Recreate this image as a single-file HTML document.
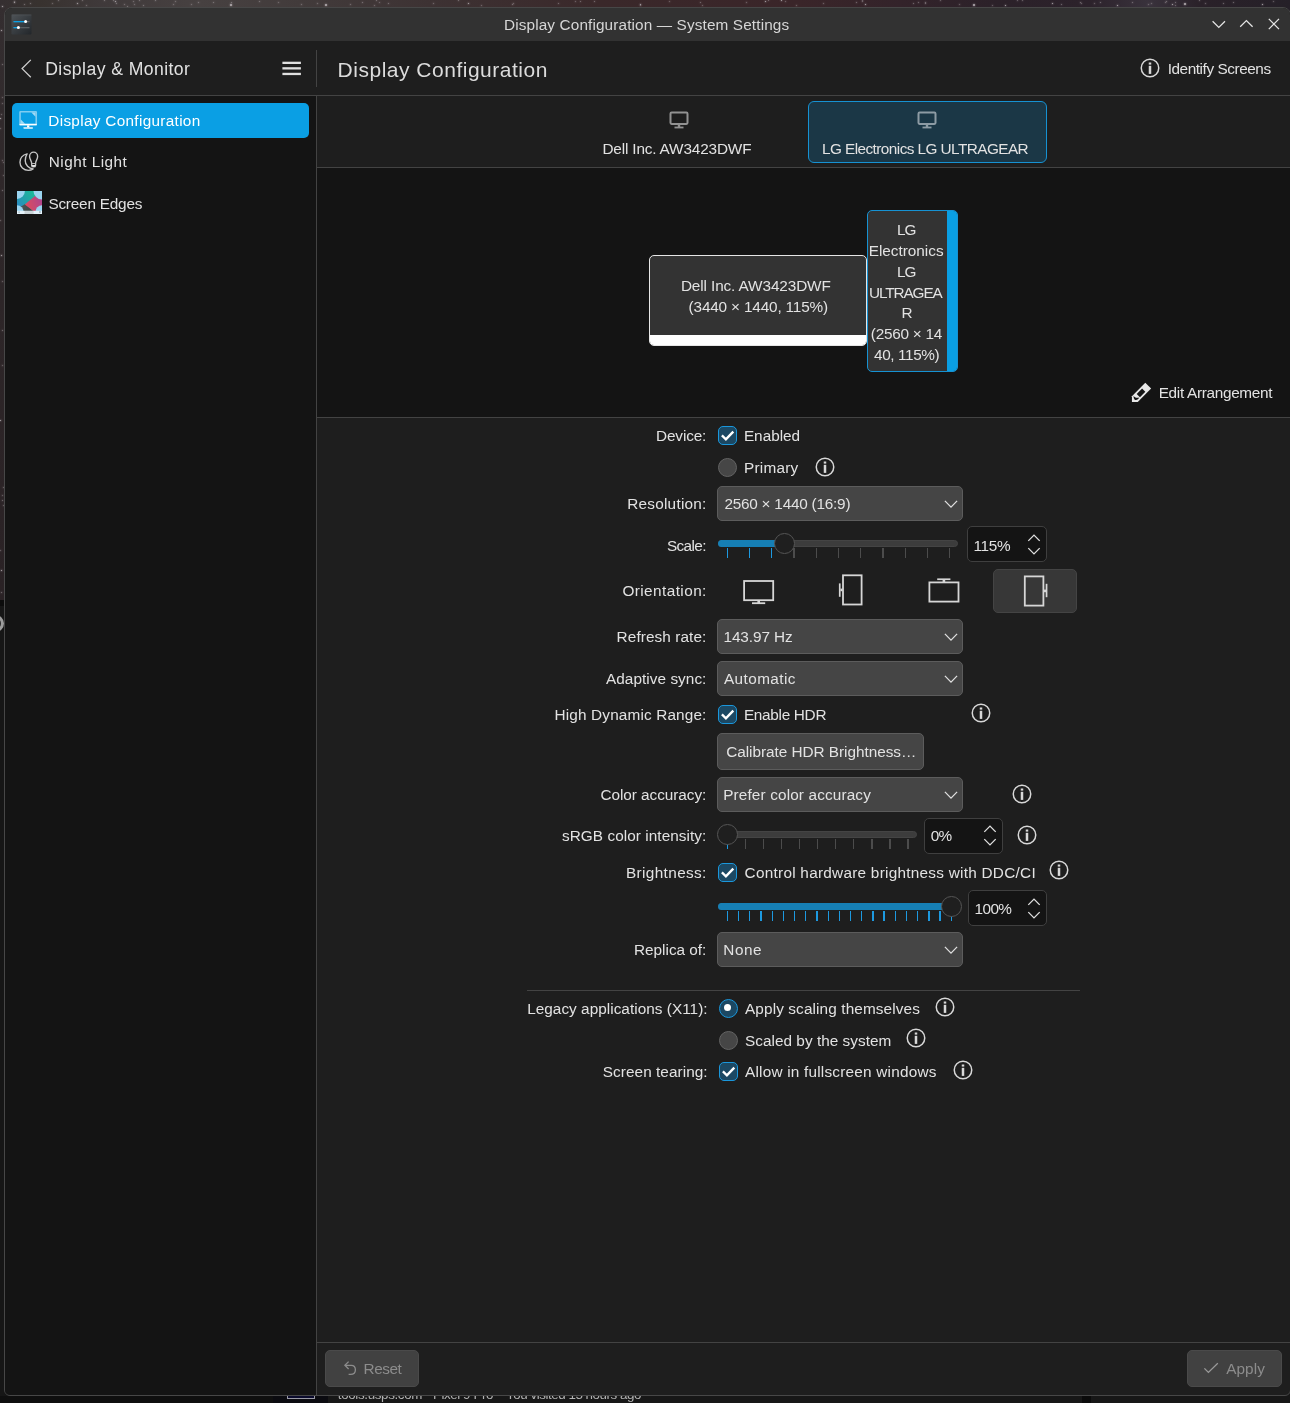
<!DOCTYPE html>
<html lang="en"><head><meta charset="utf-8"><title>Display Configuration — System Settings</title>
<style>
*{box-sizing:border-box;margin:0;padding:0}
html,body{width:1290px;height:1403px;overflow:hidden}
body{position:relative;font-family:"Liberation Sans",sans-serif;background:#2c2427;color:#e2e2e2}
.a{position:absolute}
.t{position:absolute;white-space:nowrap;line-height:20px;height:20px;font-size:15.33px}
svg{position:absolute;overflow:visible}
/* desktop behind window */
.wall{position:absolute;left:0;top:0;width:1290px;height:600px;background:linear-gradient(90deg,#352f31 0,#38322f 40px,#3f393a 100px,#474141 200px,#423b3b 300px,#3d3233 430px,#3a282a 600px,#3a2529 800px,#33232a 900px,#2b2129 1000px,#2c222b 1090px,#39323c 1148px,#2a2129 1200px,#252028 1290px)}
.wall2{position:absolute;left:0;top:8px;width:5px;height:592px;background:linear-gradient(180deg,#342e30,#2e2729 200px,#2a2225)}
.star{position:absolute;border-radius:50%;background:#b5aeb2;box-shadow:0 0 1.5px .6px rgba(181,174,178,.45)}
.under{position:absolute;left:0;top:600px;width:1290px;height:803px;background:#161616}
/* window */
.win{position:absolute;left:4px;top:7px;width:1287px;height:1389px;border:1px solid #474747;border-radius:8px 8px 6px 6px;background:#1e1e1e;overflow:hidden}
.titlebar{position:absolute;left:5px;top:8px;width:1285px;height:33px;background:#323232;border-radius:7px 7px 0 0}
.sidebar{position:absolute;left:5px;top:96px;width:311px;height:1299px;background:#141414;border-radius:0 0 0 5px}
.sep{position:absolute;background:#434343}
.sel{position:absolute;left:12px;top:103px;width:297px;height:34.5px;border-radius:5px;background:#0a9fe4}
.arr{position:absolute;left:317px;top:168px;width:973px;height:249px;background:#141414}
.tabsel{position:absolute;left:808px;top:100.6px;width:239.4px;height:62px;border:1px solid #1692d3;border-radius:6px;background:#1b3746}
.mon{position:absolute;background:#333333;border-radius:5px}
.combo{position:absolute;left:717px;width:246px;height:34.6px;border:1px solid #5c5c5c;border-radius:5px;background:#454545}
.btn{position:absolute;border:1px solid #5c5c5c;border-radius:5px;background:#454545}
.spin{position:absolute;border:1px solid #3f3f3f;border-radius:5px;background:#141414}
.cb{position:absolute;width:19px;height:19px;border:1.9px solid #1a97dc;border-radius:5px;background:#1c4863}
.rb{position:absolute;width:19px;height:19px;border-radius:50%;border:1.3px solid #636363;background:#464646}
.rbs{position:absolute;width:19px;height:19px;border-radius:50%;border:1.9px solid #1a97dc;background:#1c4863}
.rbs::after{content:"";position:absolute;left:4.1px;top:4.1px;width:7px;height:7px;border-radius:50%;background:#fff}
.groove{position:absolute;height:7px;border-radius:3.5px;background:#3c3c3c;border:1px solid #444}
.fill{position:absolute;height:7px;border-radius:3.5px;background:#167fb5}
.handle{position:absolute;width:20.8px;height:20.8px;border-radius:50%;background:#1f1f1f;border:1px solid #555}
.tick{position:absolute;width:1.3px;background:#4c4c4c}
.tick.b{background:#1d99e0}
.obtn{position:absolute;left:993.4px;top:569.4px;width:83.2px;height:43.6px;border:1px solid #444;border-radius:5px;background:#373737}
.dis{position:absolute;border:1px solid #4a4a4a;border-radius:5px;background:#414141}
.txt{position:absolute;left:0;top:0;width:1290px;height:1403px;will-change:transform;overflow:hidden}

</style></head>
<body>
<div class="wall"></div><div class="wall2"></div><div class="under"></div>
<div class="star" style="left:1.5px;top:5.5px;width:1.8px;height:1.8px"></div>
<div class="star" style="left:14px;top:2px;width:1.2px;height:1.2px"></div>
<div class="star" style="left:24px;top:4px;width:1.0px;height:1.0px;opacity:.55"></div>
<div class="star" style="left:77px;top:3px;width:1.2px;height:1.2px"></div>
<div class="star" style="left:115px;top:1px;width:1.2px;height:1.2px"></div>
<div class="star" style="left:143px;top:5px;width:1.0px;height:1.0px;opacity:.55"></div>
<div class="star" style="left:230px;top:4px;width:1.8px;height:1.8px"></div>
<div class="star" style="left:325px;top:4px;width:1.8px;height:1.8px"></div>
<div class="star" style="left:362px;top:2px;width:1.0px;height:1.0px;opacity:.55"></div>
<div class="star" style="left:388px;top:3px;width:1.0px;height:1.0px;opacity:.55"></div>
<div class="star" style="left:468px;top:3px;width:1.2px;height:1.2px"></div>
<div class="star" style="left:512px;top:4px;width:1.0px;height:1.0px;opacity:.55"></div>
<div class="star" style="left:580px;top:1px;width:1.0px;height:1.0px;opacity:.55"></div>
<div class="star" style="left:640px;top:4px;width:1.2px;height:1.2px"></div>
<div class="star" style="left:700px;top:2px;width:1.0px;height:1.0px;opacity:.55"></div>
<div class="star" style="left:765px;top:1px;width:1.2px;height:1.2px"></div>
<div class="star" style="left:781px;top:0px;width:1.4px;height:1.4px"></div>
<div class="star" style="left:865px;top:4px;width:1.4px;height:1.4px"></div>
<div class="star" style="left:913px;top:3px;width:1.0px;height:1.0px;opacity:.55"></div>
<div class="star" style="left:973px;top:4px;width:2.2px;height:2.2px"></div>
<div class="star" style="left:1005px;top:5px;width:1.4px;height:1.4px"></div>
<div class="star" style="left:1052px;top:3px;width:1.2px;height:1.2px"></div>
<div class="star" style="left:1080px;top:2px;width:1.0px;height:1.0px;opacity:.55"></div>
<div class="star" style="left:1117px;top:5px;width:1.2px;height:1.2px"></div>
<div class="star" style="left:1172px;top:4px;width:1.4px;height:1.4px"></div>
<div class="star" style="left:1184px;top:3px;width:2.0px;height:2.0px"></div>
<div class="star" style="left:1233px;top:2px;width:1.0px;height:1.0px;opacity:.55"></div>
<div class="star" style="left:1262px;top:4px;width:1.2px;height:1.2px"></div>
<div class="star" style="left:1px;top:30px;width:1.2px;height:1.2px"></div>
<div class="star" style="left:2px;top:64px;width:1.0px;height:1.0px;opacity:.55"></div>
<div class="star" style="left:0px;top:118px;width:1.4px;height:1.4px"></div>
<div class="star" style="left:2px;top:190px;width:1.0px;height:1.0px;opacity:.55"></div>
<div class="star" style="left:1px;top:255px;width:1.2px;height:1.2px"></div>
<div class="star" style="left:2px;top:330px;width:1.0px;height:1.0px;opacity:.55"></div>
<div class="star" style="left:0px;top:420px;width:1.2px;height:1.2px"></div>
<div class="star" style="left:2px;top:500px;width:1.0px;height:1.0px;opacity:.55"></div>
<div class="star" style="left:1px;top:570px;width:1.4px;height:1.4px"></div>
<div class="star" style="left:1px;top:592px;width:1.0px;height:1.0px;opacity:.55"></div>
<div class="star" style="left:669px;top:1px;width:0.9px;height:0.9px;opacity:.55"></div>
<div class="star" style="left:104px;top:0px;width:1.0px;height:1.0px;opacity:.55"></div>
<div class="star" style="left:198px;top:2px;width:1.0px;height:1.0px;opacity:.55"></div>
<div class="star" style="left:124px;top:4px;width:0.8px;height:0.8px;opacity:.55"></div>
<div class="star" style="left:82px;top:0px;width:0.9px;height:0.9px;opacity:.55"></div>
<div class="star" style="left:862px;top:0px;width:0.8px;height:0.8px;opacity:.55"></div>
<div class="star" style="left:191px;top:4px;width:0.9px;height:0.9px;opacity:.55"></div>
<div class="star" style="left:127px;top:6px;width:1.0px;height:1.0px;opacity:.55"></div>
<div class="star" style="left:259px;top:1px;width:1.0px;height:1.0px;opacity:.55"></div>
<div class="star" style="left:1199px;top:0px;width:1.0px;height:1.0px;opacity:.55"></div>
<div class="star" style="left:1205px;top:3px;width:0.8px;height:0.8px;opacity:.55"></div>
<div class="star" style="left:458px;top:0px;width:1.0px;height:1.0px;opacity:.55"></div>
<div class="star" style="left:278px;top:2px;width:0.9px;height:0.9px;opacity:.55"></div>
<div class="star" style="left:301px;top:4px;width:0.8px;height:0.8px;opacity:.55"></div>
<div class="star" style="left:1175px;top:2px;width:1.0px;height:1.0px;opacity:.55"></div>
<div class="star" style="left:376px;top:0px;width:1.0px;height:1.0px;opacity:.55"></div>
<div class="star" style="left:1175px;top:5px;width:0.8px;height:0.8px;opacity:.55"></div>
<div class="star" style="left:768px;top:0px;width:1.0px;height:1.0px;opacity:.55"></div>
<div class="star" style="left:134px;top:4px;width:0.8px;height:0.8px;opacity:.55"></div>
<div class="star" style="left:1273px;top:1px;width:0.9px;height:0.9px;opacity:.55"></div>
<div class="star" style="left:1094px;top:3px;width:0.9px;height:0.9px;opacity:.55"></div>
<div class="star" style="left:959px;top:4px;width:0.9px;height:0.9px;opacity:.55"></div>
<div class="star" style="left:746px;top:2px;width:0.8px;height:0.8px;opacity:.55"></div>
<div class="star" style="left:374px;top:5px;width:0.8px;height:0.8px;opacity:.55"></div>
<div class="star" style="left:173px;top:4px;width:0.9px;height:0.9px;opacity:.55"></div>
<div class="star" style="left:1081px;top:3px;width:0.9px;height:0.9px;opacity:.55"></div>
<div class="star" style="left:925px;top:2px;width:1.0px;height:1.0px;opacity:.55"></div>
<div class="star" style="left:155px;top:0px;width:1.0px;height:1.0px;opacity:.55"></div>
<div class="star" style="left:862px;top:1px;width:0.9px;height:0.9px;opacity:.55"></div>
<div class="star" style="left:317px;top:3px;width:0.9px;height:0.9px;opacity:.55"></div>
<div class="star" style="left:86px;top:5px;width:0.8px;height:0.8px;opacity:.55"></div>
<div class="star" style="left:1148px;top:4px;width:0.9px;height:0.9px;opacity:.55"></div>
<div class="star" style="left:702px;top:5px;width:0.9px;height:0.9px;opacity:.55"></div>
<div class="star" style="left:1223px;top:3px;width:1.0px;height:1.0px;opacity:.55"></div>
<div class="star" style="left:940px;top:0px;width:0.8px;height:0.8px;opacity:.55"></div>
<div class="star" style="left:558px;top:3px;width:1.0px;height:1.0px;opacity:.55"></div>
<div class="star" style="left:139px;top:0px;width:1.0px;height:1.0px;opacity:.55"></div>
<div class="star" style="left:640px;top:5px;width:1.0px;height:1.0px;opacity:.55"></div>
<div class="star" style="left:918px;top:2px;width:1.0px;height:1.0px;opacity:.55"></div>
<div class="star" style="left:796px;top:5px;width:0.9px;height:0.9px;opacity:.55"></div>
<div class="star" style="left:52px;top:3px;width:0.9px;height:0.9px;opacity:.55"></div>
<div class="star" style="left:350px;top:4px;width:0.8px;height:0.8px;opacity:.55"></div>
<div class="star" style="left:1017px;top:0px;width:0.8px;height:0.8px;opacity:.55"></div>
<div class="star" style="left:594px;top:1px;width:1.0px;height:1.0px;opacity:.55"></div>
<div class="star" style="left:513px;top:3px;width:0.9px;height:0.9px;opacity:.55"></div>
<div class="star" style="left:1022px;top:0px;width:0.8px;height:0.8px;opacity:.55"></div>
<div class="star" style="left:925px;top:3px;width:1.0px;height:1.0px;opacity:.55"></div>
<div class="star" style="left:575px;top:1px;width:0.9px;height:0.9px;opacity:.55"></div>
<div class="star" style="left:1132px;top:2px;width:1.0px;height:1.0px;opacity:.55"></div>
<div class="star" style="left:856px;top:2px;width:1.0px;height:1.0px;opacity:.55"></div>
<div class="star" style="left:785px;top:1px;width:0.8px;height:0.8px;opacity:.55"></div>
<div class="star" style="left:175px;top:1px;width:0.8px;height:0.8px;opacity:.55"></div>
<div class="star" style="left:481px;top:5px;width:0.8px;height:0.8px;opacity:.55"></div>
<div class="star" style="left:30px;top:3px;width:1.0px;height:1.0px;opacity:.55"></div>
<div class="star" style="left:379px;top:2px;width:0.9px;height:0.9px;opacity:.55"></div>
<div class="star" style="left:14px;top:1px;width:0.9px;height:0.9px;opacity:.55"></div>
<div class="star" style="left:1100px;top:2px;width:1.0px;height:1.0px;opacity:.55"></div>
<div class="star" style="left:1165px;top:2px;width:0.8px;height:0.8px;opacity:.55"></div>
<div class="star" style="left:1061px;top:4px;width:1.0px;height:1.0px;opacity:.55"></div>
<div class="star" style="left:116px;top:3px;width:1.0px;height:1.0px;opacity:.55"></div>
<div class="star" style="left:1151px;top:3px;width:0.9px;height:0.9px;opacity:.55"></div>
<div class="star" style="left:823px;top:3px;width:0.8px;height:0.8px;opacity:.55"></div>
<div class="star" style="left:992px;top:5px;width:0.9px;height:0.9px;opacity:.55"></div>
<div class="star" style="left:133px;top:1px;width:0.8px;height:0.8px;opacity:.55"></div>
<div class="star" style="left:433px;top:3px;width:0.8px;height:0.8px;opacity:.55"></div>
<div class="star" style="left:231px;top:2px;width:1.0px;height:1.0px;opacity:.55"></div>
<div class="star" style="left:113px;top:0px;width:0.8px;height:0.8px;opacity:.55"></div>
<div class="star" style="left:1166px;top:1px;width:1.0px;height:1.0px;opacity:.55"></div>
<div class="star" style="left:213px;top:2px;width:1.0px;height:1.0px;opacity:.55"></div>
<div class="star" style="left:58px;top:0px;width:0.8px;height:0.8px;opacity:.55"></div>
<div class="star" style="left:3px;top:162px;width:0.9px;height:0.9px;opacity:.55"></div>
<div class="star" style="left:2px;top:365px;width:0.9px;height:0.9px;opacity:.55"></div>
<div class="star" style="left:2px;top:495px;width:0.9px;height:0.9px;opacity:.55"></div>
<div class="star" style="left:0px;top:128px;width:0.9px;height:0.9px;opacity:.55"></div>
<div class="star" style="left:3px;top:487px;width:0.9px;height:0.9px;opacity:.55"></div>
<div class="star" style="left:3px;top:505px;width:0.9px;height:0.9px;opacity:.55"></div>
<div class="star" style="left:2px;top:97px;width:0.9px;height:0.9px;opacity:.55"></div>
<div class="star" style="left:1px;top:114px;width:0.9px;height:0.9px;opacity:.55"></div>
<div class="star" style="left:2px;top:281px;width:0.9px;height:0.9px;opacity:.55"></div>
<div class="star" style="left:3px;top:175px;width:0.9px;height:0.9px;opacity:.55"></div>
<div class="star" style="left:0px;top:220px;width:0.9px;height:0.9px;opacity:.55"></div>
<div class="star" style="left:2px;top:160px;width:0.9px;height:0.9px;opacity:.55"></div>
<div class="star" style="left:0px;top:550px;width:0.9px;height:0.9px;opacity:.55"></div>
<div class="star" style="left:2px;top:103px;width:0.9px;height:0.9px;opacity:.55"></div>
<div class="a" style="left:0;top:600px;width:5px;height:6px;background:#0c0c0c"></div>
<div class="a" style="left:-13px;top:614.5px;width:17px;height:17px;border-radius:50%;border:3px solid #9c9c9c;background:#2a2a2a"></div>
<div class="a" style="left:0;top:1396px;width:1290px;height:7px;background:#171717"></div>
<div class="a" style="left:0;top:1396px;width:328px;height:7px;background:#0f0f0f"></div>
<div class="a" style="left:273px;top:1396px;width:55px;height:7px;background:#0b0b10"></div>
<div class="a" style="left:287px;top:1380px;width:28.2px;height:19px;border:1.8px solid #9a9aa6;background:#0a0a2c"></div>
<div class="a" style="left:1082px;top:1396px;width:9px;height:7px;background:#0b0b0b"></div>
<div class="txt"><div class="t" style="left:337.80px;top:1384.96px;font-size:13.4px;letter-spacing:-0.358px;color:#b2b2b2">tools.usps.com</div>
<div class="t" style="left:425.80px;top:1381.96px;font-size:13.4px;letter-spacing:0.000px;color:#b2b2b2">·</div>
<div class="t" style="left:433.00px;top:1384.96px;font-size:13.4px;letter-spacing:-0.440px;color:#b2b2b2">Pixel 9 Pro</div>
<div class="t" style="left:497.00px;top:1381.96px;font-size:13.4px;letter-spacing:0.000px;color:#b2b2b2">·</div>
<div class="t" style="left:506.00px;top:1384.96px;font-size:13.4px;letter-spacing:-0.466px;color:#b2b2b2">You visited 15 hours ago</div></div>
<div class="win"></div>
<div class="titlebar"></div>
<div class="sidebar"></div>
<div class="sep" style="left:5px;top:95px;width:1285px;height:1px"></div>
<div class="sep" style="left:316px;top:50px;width:1px;height:37px"></div>
<div class="sep" style="left:316px;top:96px;width:1px;height:1299px"></div>
<div class="arr"></div>
<div class="sep" style="left:317px;top:167px;width:973px;height:1px"></div>
<div class="sep" style="left:317px;top:417px;width:973px;height:1px"></div>
<div class="sep" style="left:317px;top:1342px;width:973px;height:1px"></div>
<div class="sep" style="left:527px;top:990px;width:553px;height:1px"></div>
<svg style="left:10.7px;top:13.9px" width="21" height="21" viewBox="0 0 21 21">
<defs><linearGradient id="ag" x1="0" y1="0" x2="1" y2="1"><stop offset="0" stop-color="#4e5357"/><stop offset="1" stop-color="#22262a"/></linearGradient></defs>
<rect x="0.5" y="0.5" width="20" height="20" rx="1.2" fill="url(#ag)"/>
<rect x="0.5" y="0.5" width="20" height="1" fill="#55595c" opacity=".6"/>
<rect x="2.5" y="7" width="16" height="1.3" fill="#5a5e61"/><rect x="2.5" y="7" width="12" height="1.3" fill="#0a9fe4"/><circle cx="14.6" cy="7.6" r="1.5" fill="#fff"/>
<rect x="2.5" y="13" width="16" height="1.3" fill="#5a5e61"/><rect x="2.5" y="13" width="5" height="1.3" fill="#0a9fe4"/><circle cx="7.4" cy="13.6" r="1.5" fill="#fff"/>
</svg>
<svg style="left:1205px;top:12px" width="80" height="24" viewBox="0 0 80 24" fill="none" stroke="#e6e6e6" stroke-width="1.25">
<path d="M7.6 9.2 L13.8 15.4 L20 9.2"/>
<path d="M35.2 14.8 L41.4 8.6 L47.6 14.8"/>
<path d="M63.8 6.9 L74 17.1 M74 6.9 L63.8 17.1"/>
</svg>
<svg style="left:18px;top:56px" width="20" height="26" viewBox="0 0 20 26" fill="none" stroke="#cfcfcf" stroke-width="1.3"><path d="M12.8 3.9 L4.1 12.6 L12.8 21.3"/></svg>
<svg style="left:282px;top:60px" width="20" height="18" viewBox="0 0 20 18" fill="#e0e0e0"><rect x="0.4" y="1.7" width="18.5" height="2.3"/><rect x="0.4" y="7.2" width="18.5" height="2.3"/><rect x="0.4" y="12.8" width="18.5" height="2.3"/></svg>
<div class="sel"></div>
<svg style="left:12px;top:104px" width="34" height="32" viewBox="0 0 1290 1214">
<rect x="305" y="295" width="615" height="485" rx="14" fill="none" stroke="#fff" stroke-opacity=".48" stroke-width="60"/>
<path d="M735 325 L890 325 L890 480 Z" fill="#fff" fill-opacity=".62"/><path d="M335 590 L335 750 L495 750 Z" fill="#fff" fill-opacity=".62"/>
<rect x="285" y="752" width="655" height="58" fill="#fff"/>
<rect x="572" y="808" width="86" height="80" fill="#fff"/><rect x="440" y="880" width="350" height="60" rx="8" fill="#fff" fill-opacity=".92"/>
</svg>
<svg style="left:12px;top:146px" width="34" height="32" viewBox="0 0 1290 1214" fill="none" stroke="#c6c6c6" stroke-width="52" stroke-linejoin="round">
<path d="M572 296 C400 335 302 470 302 612 C302 790 442 924 620 924 C690 924 750 904 803 870 C640 850 502 722 502 562 C502 452 530 362 572 296 Z"/>
<path d="M746 655 C746 562 667 502 667 396 C667 302 736 234 820 234 C904 234 973 302 973 396 C973 502 894 562 894 655 L894 736 C894 770 860 794 820 794 C780 794 746 770 746 736 Z"/>
<path d="M746 664 L894 664" stroke-width="34"/>
<path d="M746 722 L894 722 L894 736 C894 770 860 794 820 794 C780 794 746 770 746 736 Z" fill="#e2e2e2" stroke="none"/>
</svg>
<svg style="left:16.98px;top:191.1px" width="25.1" height="23.1" viewBox="225 230 810 745" preserveAspectRatio="none">
<defs><clipPath id="sc"><rect x="225" y="230" width="810" height="745"/></clipPath>
<linearGradient id="tg" gradientUnits="userSpaceOnUse" x1="240" y1="700" x2="780" y2="260"><stop offset="0" stop-color="#2a8cc2"/><stop offset="0.5" stop-color="#22a4a8"/><stop offset="1" stop-color="#1cba98"/></linearGradient>
<linearGradient id="pg" gradientUnits="userSpaceOnUse" x1="480" y1="700" x2="1035" y2="520"><stop offset="0" stop-color="#e24a5e"/><stop offset="0.45" stop-color="#c84a72"/><stop offset="1" stop-color="#b0448e"/></linearGradient>
<linearGradient id="dg" gradientUnits="userSpaceOnUse" x1="380" y1="720" x2="700" y2="870"><stop offset="0" stop-color="#4c5254"/><stop offset="1" stop-color="#3a4846"/></linearGradient></defs>
<g clip-path="url(#sc)">
<rect x="225" y="230" width="810" height="745" fill="url(#tg)"/>
<path d="M330 745 L490 650 L770 880 L400 880 Z" fill="url(#dg)"/>
<path d="M805 392 L478 662 L750 872 L900 885 L1035 722 L1035 470 Z" fill="url(#pg)"/>
<circle cx="225" cy="230" r="255" fill="#9ad4f0"/><circle cx="1035" cy="230" r="278" fill="#9ad4f0"/><circle cx="225" cy="910" r="218" fill="#9ad4f0"/><circle cx="1035" cy="910" r="218" fill="#9ad4f0"/>
<rect x="225" y="868" width="810" height="107" fill="#e4f2fa"/><rect x="468" y="878" width="292" height="97" fill="#cad3d7"/><rect x="268" y="888" width="50" height="50" fill="#b4c6cf"/><rect x="940" y="880" width="52" height="58" fill="#a4b6bf"/>
</g></svg>
<svg style="left:1139.80px;top:57.80px" width="20" height="20" viewBox="0 0 20 20"><circle cx="10" cy="10" r="8.75" fill="none" stroke="#d8d8d8" stroke-width="1.5"/><rect x="8.75" y="7.8" width="2.5" height="8.1" fill="#d8d8d8"/><rect x="8.75" y="4.5" width="2.5" height="2.1" fill="#d8d8d8"/></svg>
<div class="tabsel"></div>
<svg style="left:668.1px;top:109px" width="22" height="22" viewBox="0 0 22 22"><rect x="2.5" y="3.6" width="17.0" height="11.3" rx="1.1" fill="none" stroke="#929292" stroke-width="2"/><rect x="9.8" y="15.6" width="2.4" height="2.4" fill="#929292"/><rect x="6.5" y="17.6" width="9.0" height="1.8" fill="#929292"/></svg>
<svg style="left:916.2px;top:109px" width="22" height="22" viewBox="0 0 22 22"><rect x="2.5" y="3.6" width="17.0" height="11.3" rx="1.1" fill="none" stroke="#8d9ba4" stroke-width="2"/><rect x="9.8" y="15.6" width="2.4" height="2.4" fill="#8d9ba4"/><rect x="6.5" y="17.6" width="9.0" height="1.8" fill="#8d9ba4"/></svg>
<div class="mon" style="left:649px;top:255px;width:218px;height:91.3px;border:1px solid #e6e6e6;overflow:hidden"><div class="a" style="left:0;bottom:0;width:100%;height:10.7px;background:#fff"></div></div>
<div class="mon" style="left:867.2px;top:210.2px;width:91.3px;height:161.7px;border:1px solid #1692d3;overflow:hidden"><div class="a" style="right:0;top:0;height:100%;width:10.6px;background:#0a9fe4"></div></div>
<svg style="left:1126px;top:378px" width="30" height="30" viewBox="0 0 1290 1290">
<path d="M830 205 L1080 455 L505 1032 L255 1032 L255 780 Z" fill="#e8e8e8"/>
<path d="M692 452 L832 592 L600 824 L460 684 Z" fill="#141414"/>
<path d="M330 760 C372 842 455 872 566 836 C540 925 445 965 375 930 C335 885 322 830 330 760 Z" fill="#141414"/>
</svg>
<div class="cb" style="left:718px;top:426px"></div>
<svg style="left:718px;top:426px" width="19" height="19" viewBox="0 0 19 19" fill="none" stroke="#fff" stroke-width="2.35"><path d="M3.9 9.4 L7.9 13.3 L15.3 5.6"/></svg>
<div class="rb" style="left:718px;top:458px"></div>
<svg style="left:815.00px;top:456.80px" width="20" height="20" viewBox="0 0 20 20"><circle cx="10" cy="10" r="8.75" fill="none" stroke="#d8d8d8" stroke-width="1.5"/><rect x="8.75" y="7.8" width="2.5" height="8.1" fill="#d8d8d8"/><rect x="8.75" y="4.5" width="2.5" height="2.1" fill="#d8d8d8"/></svg>
<div class="combo" style="top:486px"></div>
<svg style="left:940.6px;top:493.9px" width="20" height="20" viewBox="-10 -10 20 20" fill="none" stroke="#e0e0e0" stroke-width="1.3"><path d="M-6.1 -3.1 L0 3.1 L6.1 -3.1"/></svg>
<div class="groove" style="left:718px;top:540px;width:240px"></div>
<div class="fill" style="left:718px;top:540px;width:67px"></div>
<div class="tick b" style="left:726.75px;top:547.9px;height:10.2px"></div>
<div class="tick b" style="left:748.97px;top:547.9px;height:10.2px"></div>
<div class="tick b" style="left:771.19px;top:547.9px;height:10.2px"></div>
<div class="tick" style="left:793.41px;top:547.9px;height:10.2px"></div>
<div class="tick" style="left:815.63px;top:547.9px;height:10.2px"></div>
<div class="tick" style="left:837.85px;top:547.9px;height:10.2px"></div>
<div class="tick" style="left:860.07px;top:547.9px;height:10.2px"></div>
<div class="tick" style="left:882.29px;top:547.9px;height:10.2px"></div>
<div class="tick" style="left:904.51px;top:547.9px;height:10.2px"></div>
<div class="tick" style="left:926.73px;top:547.9px;height:10.2px"></div>
<div class="tick" style="left:948.95px;top:547.9px;height:10.2px"></div>
<div class="handle" style="left:774.4px;top:532.9px"></div>
<div class="spin" style="left:967.4px;top:526.4px;width:79.6px;height:36px"></div>
<svg style="left:1023.7px;top:528.0px" width="20" height="20" viewBox="-10 -10 20 20" fill="none" stroke="#e0e0e0" stroke-width="1.3"><path d="M-5.7 2.9 L0 -2.9 L5.7 2.9"/></svg>
<svg style="left:1023.7px;top:541.0px" width="20" height="20" viewBox="-10 -10 20 20" fill="none" stroke="#e0e0e0" stroke-width="1.3"><path d="M-5.7 -2.9 L0 2.9 L5.7 -2.9"/></svg>
<div class="obtn"></div>
<svg style="left:742px;top:575.7px" width="34" height="32" viewBox="0 0 34 32"><rect x="2.1" y="5" width="29.1" height="19.2" fill="none" stroke="#d6d6d6" stroke-width="1.8"/><rect x="15.4" y="24.8" width="2.6" height="2.2" fill="#d6d6d6"/><rect x="10" y="26.3" width="13.2" height="1.8" fill="#d6d6d6"/></svg>
<svg style="left:834px;top:572px" width="34" height="36" viewBox="0 0 34 36"><rect x="9" y="3.3" width="18.6" height="29.2" fill="none" stroke="#d6d6d6" stroke-width="1.8"/><rect x="6.4" y="16.6" width="2.2" height="2.6" fill="#d6d6d6"/><rect x="4.9" y="11.4" width="1.7" height="13.4" fill="#d6d6d6"/></svg>
<svg style="left:926px;top:575px" width="36" height="32" viewBox="0 0 36 32"><rect x="3.4" y="7.4" width="29.1" height="19.2" fill="none" stroke="#d6d6d6" stroke-width="1.8"/><rect x="16.6" y="4.8" width="2.6" height="2.2" fill="#d6d6d6"/><rect x="11.2" y="3.4" width="13.2" height="1.7" fill="#d6d6d6"/></svg>
<svg style="left:1018px;top:572.2px" width="34" height="36" viewBox="0 0 34 36"><rect x="6.8" y="4.4" width="18.6" height="29.2" fill="none" stroke="#d6d6d6" stroke-width="1.8"/><rect x="25.8" y="17.6" width="2.2" height="2.6" fill="#d6d6d6"/><rect x="27.7" y="11.8" width="1.7" height="13.4" fill="#d6d6d6"/></svg>
<div class="combo" style="top:619px"></div>
<svg style="left:940.6px;top:626.9px" width="20" height="20" viewBox="-10 -10 20 20" fill="none" stroke="#e0e0e0" stroke-width="1.3"><path d="M-6.1 -3.1 L0 3.1 L6.1 -3.1"/></svg>
<div class="combo" style="top:661px"></div>
<svg style="left:940.6px;top:668.9px" width="20" height="20" viewBox="-10 -10 20 20" fill="none" stroke="#e0e0e0" stroke-width="1.3"><path d="M-6.1 -3.1 L0 3.1 L6.1 -3.1"/></svg>
<div class="cb" style="left:718px;top:705px"></div>
<svg style="left:718px;top:705px" width="19" height="19" viewBox="0 0 19 19" fill="none" stroke="#fff" stroke-width="2.35"><path d="M3.9 9.4 L7.9 13.3 L15.3 5.6"/></svg>
<svg style="left:971.25px;top:703.00px" width="20" height="20" viewBox="0 0 20 20"><circle cx="10" cy="10" r="8.75" fill="none" stroke="#d8d8d8" stroke-width="1.5"/><rect x="8.75" y="7.8" width="2.5" height="8.1" fill="#d8d8d8"/><rect x="8.75" y="4.5" width="2.5" height="2.1" fill="#d8d8d8"/></svg>
<div class="btn" style="left:717px;top:733.4px;width:207.2px;height:36.6px"></div>
<div class="combo" style="top:777.3px"></div>
<svg style="left:940.6px;top:785.2px" width="20" height="20" viewBox="-10 -10 20 20" fill="none" stroke="#e0e0e0" stroke-width="1.3"><path d="M-6.1 -3.1 L0 3.1 L6.1 -3.1"/></svg>
<svg style="left:1011.60px;top:783.90px" width="20" height="20" viewBox="0 0 20 20"><circle cx="10" cy="10" r="8.75" fill="none" stroke="#d8d8d8" stroke-width="1.5"/><rect x="8.75" y="7.8" width="2.5" height="8.1" fill="#d8d8d8"/><rect x="8.75" y="4.5" width="2.5" height="2.1" fill="#d8d8d8"/></svg>
<div class="groove" style="left:718px;top:831px;width:199px"></div>
<div class="tick b" style="left:726.75px;top:844.4px;height:4.4px"></div>
<div class="tick" style="left:744.81px;top:838.8px;height:10px"></div>
<div class="tick" style="left:762.87px;top:838.8px;height:10px"></div>
<div class="tick" style="left:780.93px;top:838.8px;height:10px"></div>
<div class="tick" style="left:798.99px;top:838.8px;height:10px"></div>
<div class="tick" style="left:817.05px;top:838.8px;height:10px"></div>
<div class="tick" style="left:835.11px;top:838.8px;height:10px"></div>
<div class="tick" style="left:853.17px;top:838.8px;height:10px"></div>
<div class="tick" style="left:871.23px;top:838.8px;height:10px"></div>
<div class="tick" style="left:889.29px;top:838.8px;height:10px"></div>
<div class="tick" style="left:907.35px;top:838.8px;height:10px"></div>
<div class="handle" style="left:716.8px;top:823.9px"></div>
<div class="spin" style="left:924.4px;top:817.5px;width:78.6px;height:36px"></div>
<svg style="left:979.7px;top:819.1px" width="20" height="20" viewBox="-10 -10 20 20" fill="none" stroke="#e0e0e0" stroke-width="1.3"><path d="M-5.7 2.9 L0 -2.9 L5.7 2.9"/></svg>
<svg style="left:979.7px;top:832.1px" width="20" height="20" viewBox="-10 -10 20 20" fill="none" stroke="#e0e0e0" stroke-width="1.3"><path d="M-5.7 -2.9 L0 2.9 L5.7 -2.9"/></svg>
<svg style="left:1017.10px;top:825.00px" width="20" height="20" viewBox="0 0 20 20"><circle cx="10" cy="10" r="8.75" fill="none" stroke="#d8d8d8" stroke-width="1.5"/><rect x="8.75" y="7.8" width="2.5" height="8.1" fill="#d8d8d8"/><rect x="8.75" y="4.5" width="2.5" height="2.1" fill="#d8d8d8"/></svg>
<div class="cb" style="left:718px;top:863.2px"></div>
<svg style="left:718px;top:863.2px" width="19" height="19" viewBox="0 0 19 19" fill="none" stroke="#fff" stroke-width="2.35"><path d="M3.9 9.4 L7.9 13.3 L15.3 5.6"/></svg>
<svg style="left:1048.80px;top:860.20px" width="20" height="20" viewBox="0 0 20 20"><circle cx="10" cy="10" r="8.75" fill="none" stroke="#d8d8d8" stroke-width="1.5"/><rect x="8.75" y="7.8" width="2.5" height="8.1" fill="#d8d8d8"/><rect x="8.75" y="4.5" width="2.5" height="2.1" fill="#d8d8d8"/></svg>
<div class="groove" style="left:718px;top:903px;width:240px"></div>
<div class="fill" style="left:718px;top:903px;width:234px"></div>
<div class="tick b" style="left:726.75px;top:910.9px;height:10.1px"></div>
<div class="tick b" style="left:737.95px;top:910.9px;height:10.1px"></div>
<div class="tick b" style="left:749.14px;top:910.9px;height:10.1px"></div>
<div class="tick b" style="left:760.34px;top:910.9px;height:10.1px"></div>
<div class="tick b" style="left:771.53px;top:910.9px;height:10.1px"></div>
<div class="tick b" style="left:782.73px;top:910.9px;height:10.1px"></div>
<div class="tick b" style="left:793.92px;top:910.9px;height:10.1px"></div>
<div class="tick b" style="left:805.12px;top:910.9px;height:10.1px"></div>
<div class="tick b" style="left:816.31px;top:910.9px;height:10.1px"></div>
<div class="tick b" style="left:827.50px;top:910.9px;height:10.1px"></div>
<div class="tick b" style="left:838.70px;top:910.9px;height:10.1px"></div>
<div class="tick b" style="left:849.89px;top:910.9px;height:10.1px"></div>
<div class="tick b" style="left:861.09px;top:910.9px;height:10.1px"></div>
<div class="tick b" style="left:872.28px;top:910.9px;height:10.1px"></div>
<div class="tick b" style="left:883.48px;top:910.9px;height:10.1px"></div>
<div class="tick b" style="left:894.68px;top:910.9px;height:10.1px"></div>
<div class="tick b" style="left:905.87px;top:910.9px;height:10.1px"></div>
<div class="tick b" style="left:917.06px;top:910.9px;height:10.1px"></div>
<div class="tick b" style="left:928.26px;top:910.9px;height:10.1px"></div>
<div class="tick b" style="left:939.46px;top:910.9px;height:10.1px"></div>
<div class="tick b" style="left:950.65px;top:910.9px;height:10.1px"></div>
<div class="handle" style="left:940.9px;top:896.4px"></div>
<div class="spin" style="left:968.3px;top:890.2px;width:78.6px;height:36px"></div>
<svg style="left:1023.6px;top:891.8px" width="20" height="20" viewBox="-10 -10 20 20" fill="none" stroke="#e0e0e0" stroke-width="1.3"><path d="M-5.7 2.9 L0 -2.9 L5.7 2.9"/></svg>
<svg style="left:1023.6px;top:904.8px" width="20" height="20" viewBox="-10 -10 20 20" fill="none" stroke="#e0e0e0" stroke-width="1.3"><path d="M-5.7 -2.9 L0 2.9 L5.7 -2.9"/></svg>
<div class="combo" style="top:932.4px"></div>
<svg style="left:940.6px;top:940.3px" width="20" height="20" viewBox="-10 -10 20 20" fill="none" stroke="#e0e0e0" stroke-width="1.3"><path d="M-6.1 -3.1 L0 3.1 L6.1 -3.1"/></svg>
<div class="rbs" style="left:719px;top:999.2px"></div>
<svg style="left:934.60px;top:996.90px" width="20" height="20" viewBox="0 0 20 20"><circle cx="10" cy="10" r="8.75" fill="none" stroke="#d8d8d8" stroke-width="1.5"/><rect x="8.75" y="7.8" width="2.5" height="8.1" fill="#d8d8d8"/><rect x="8.75" y="4.5" width="2.5" height="2.1" fill="#d8d8d8"/></svg>
<div class="rb" style="left:719px;top:1031.2px"></div>
<svg style="left:906.00px;top:1028.20px" width="20" height="20" viewBox="0 0 20 20"><circle cx="10" cy="10" r="8.75" fill="none" stroke="#d8d8d8" stroke-width="1.5"/><rect x="8.75" y="7.8" width="2.5" height="8.1" fill="#d8d8d8"/><rect x="8.75" y="4.5" width="2.5" height="2.1" fill="#d8d8d8"/></svg>
<div class="cb" style="left:719px;top:1062.2px"></div>
<svg style="left:719px;top:1062.2px" width="19" height="19" viewBox="0 0 19 19" fill="none" stroke="#fff" stroke-width="2.35"><path d="M3.9 9.4 L7.9 13.3 L15.3 5.6"/></svg>
<svg style="left:953.00px;top:1059.50px" width="20" height="20" viewBox="0 0 20 20"><circle cx="10" cy="10" r="8.75" fill="none" stroke="#d8d8d8" stroke-width="1.5"/><rect x="8.75" y="7.8" width="2.5" height="8.1" fill="#d8d8d8"/><rect x="8.75" y="4.5" width="2.5" height="2.1" fill="#d8d8d8"/></svg>
<div class="dis" style="left:325px;top:1350px;width:94px;height:36.7px"></div>
<div class="dis" style="left:1187.2px;top:1350px;width:94.4px;height:36.7px"></div>
<svg style="left:342px;top:1359px" width="18" height="18" viewBox="0 0 18 18" fill="none" stroke="#8c8c8c" stroke-width="1.3"><path d="M6.6 2.6 L2.9 6.3 L6.6 10"/><path d="M3.2 6.3 L9.2 6.3 C12 6.3 13.4 8.4 13.4 10.8 C13.4 13.4 11.6 15.4 8.6 15.4 L6.6 15.4"/></svg>
<svg style="left:1202px;top:1360px" width="18" height="16" viewBox="0 0 18 16" fill="none" stroke="#9a9a9a" stroke-width="1.3"><path d="M2.4 8.4 L6.4 12.4 L15.8 3.2"/></svg>
<!-- text labels -->
<div class="txt">
<div class="t" style="left:504.00px;top:14.69px;font-size:15.33px;letter-spacing:0.128px;color:#d6d6d6">Display Configuration — System Settings</div>
<div class="t" style="left:45.20px;top:59.20px;font-size:17.6px;letter-spacing:0.425px;color:#e2e2e2">Display &amp; Monitor</div>
<div class="t" style="left:48.30px;top:110.69px;font-size:15.33px;letter-spacing:0.312px;color:#ffffff">Display Configuration</div>
<div class="t" style="left:48.80px;top:152.39px;font-size:15.33px;letter-spacing:0.478px;color:#e2e2e2">Night Light</div>
<div class="t" style="left:48.40px;top:193.99px;font-size:15.33px;letter-spacing:-0.211px;color:#e2e2e2">Screen Edges</div>
<div class="t" style="left:337.60px;top:60.22px;font-size:21px;letter-spacing:0.509px;color:#dcdcdc">Display Configuration</div>
<div class="t" style="left:1167.70px;top:59.09px;font-size:15.33px;letter-spacing:-0.436px;color:#e2e2e2">Identify Screens</div>
<div class="t" style="left:602.40px;top:138.69px;font-size:15.33px;letter-spacing:-0.155px;color:#e2e2e2">Dell Inc. AW3423DWF</div>
<div class="t" style="left:822.00px;top:138.69px;font-size:15.33px;letter-spacing:-0.558px;color:#e2e2e2">LG Electronics LG ULTRAGEAR</div>
<div class="t" style="left:680.90px;top:276.29px;font-size:15.33px;letter-spacing:-0.110px;color:#e2e2e2">Dell Inc. AW3423DWF</div>
<div class="t" style="left:688.60px;top:296.69px;font-size:15.33px;letter-spacing:-0.164px;color:#e2e2e2">(3440 × 1440, 115%)</div>
<div class="t" style="left:897.05px;top:219.99px;font-size:15.33px;letter-spacing:-1.025px;color:#e2e2e2">LG</div>
<div class="t" style="left:868.70px;top:240.89px;font-size:15.33px;letter-spacing:-0.010px;color:#e2e2e2">Electronics</div>
<div class="t" style="left:897.05px;top:261.69px;font-size:15.33px;letter-spacing:-1.025px;color:#e2e2e2">LG</div>
<div class="t" style="left:869.05px;top:282.59px;font-size:15.33px;letter-spacing:-1.108px;color:#e2e2e2">ULTRAGEA</div>
<div class="t" style="left:901.55px;top:303.39px;font-size:15.33px;letter-spacing:-1.300px;color:#e2e2e2">R</div>
<div class="t" style="left:870.80px;top:324.29px;font-size:15.33px;letter-spacing:-0.244px;color:#e2e2e2">(2560 × 14</div>
<div class="t" style="left:874.05px;top:345.19px;font-size:15.33px;letter-spacing:-0.392px;color:#e2e2e2">40, 115%)</div>
<div class="t" style="left:1158.70px;top:382.69px;font-size:15.33px;letter-spacing:-0.308px;color:#e2e2e2">Edit Arrangement</div>
<div class="t" style="left:656.00px;top:425.69px;font-size:15.33px;letter-spacing:-0.125px;color:#e2e2e2">Device:</div>
<div class="t" style="left:627.20px;top:493.69px;font-size:15.33px;letter-spacing:0.247px;color:#e2e2e2">Resolution:</div>
<div class="t" style="left:666.93px;top:535.69px;font-size:15.33px;letter-spacing:-0.620px;color:#e2e2e2">Scale:</div>
<div class="t" style="left:622.40px;top:580.69px;font-size:15.33px;letter-spacing:0.429px;color:#e2e2e2">Orientation:</div>
<div class="t" style="left:616.60px;top:626.99px;font-size:15.33px;letter-spacing:0.096px;color:#e2e2e2">Refresh rate:</div>
<div class="t" style="left:606.00px;top:668.89px;font-size:15.33px;letter-spacing:0.052px;color:#e2e2e2">Adaptive sync:</div>
<div class="t" style="left:554.60px;top:704.99px;font-size:15.33px;letter-spacing:0.148px;color:#e2e2e2">High Dynamic Range:</div>
<div class="t" style="left:600.40px;top:785.19px;font-size:15.33px;letter-spacing:-0.037px;color:#e2e2e2">Color accuracy:</div>
<div class="t" style="left:562.00px;top:826.29px;font-size:15.33px;letter-spacing:0.062px;color:#e2e2e2">sRGB color intensity:</div>
<div class="t" style="left:626.00px;top:862.99px;font-size:15.33px;letter-spacing:0.368px;color:#e2e2e2">Brightness:</div>
<div class="t" style="left:634.00px;top:940.29px;font-size:15.33px;letter-spacing:-0.006px;color:#e2e2e2">Replica of:</div>
<div class="t" style="left:527.20px;top:999.29px;font-size:15.33px;letter-spacing:0.034px;color:#e2e2e2">Legacy applications (X11):</div>
<div class="t" style="left:602.80px;top:1061.69px;font-size:15.33px;letter-spacing:0.058px;color:#e2e2e2">Screen tearing:</div>
<div class="t" style="left:743.90px;top:425.69px;font-size:15.33px;letter-spacing:-0.005px;color:#e2e2e2">Enabled</div>
<div class="t" style="left:743.90px;top:457.59px;font-size:15.33px;letter-spacing:0.261px;color:#e2e2e2">Primary</div>
<div class="t" style="left:724.40px;top:493.69px;font-size:15.33px;letter-spacing:-0.227px;color:#e2e2e2">2560 × 1440 (16:9)</div>
<div class="t" style="left:973.40px;top:535.69px;font-size:15.33px;letter-spacing:-0.279px;color:#e2e2e2">115%</div>
<div class="t" style="left:723.50px;top:626.89px;font-size:15.33px;letter-spacing:-0.089px;color:#e2e2e2">143.97 Hz</div>
<div class="t" style="left:724.00px;top:668.89px;font-size:15.33px;letter-spacing:0.401px;color:#e2e2e2">Automatic</div>
<div class="t" style="left:743.90px;top:704.99px;font-size:15.33px;letter-spacing:-0.292px;color:#e2e2e2">Enable HDR</div>
<div class="t" style="left:726.20px;top:741.99px;font-size:15.33px;letter-spacing:-0.029px;color:#e2e2e2">Calibrate HDR Brightness…</div>
<div class="t" style="left:723.20px;top:785.19px;font-size:15.33px;letter-spacing:0.142px;color:#e2e2e2">Prefer color accuracy</div>
<div class="t" style="left:930.70px;top:826.29px;font-size:15.33px;letter-spacing:-0.620px;color:#e2e2e2">0%</div>
<div class="t" style="left:744.60px;top:862.99px;font-size:15.33px;letter-spacing:0.261px;color:#e2e2e2">Control hardware brightness with DDC/CI</div>
<div class="t" style="left:974.59px;top:898.89px;font-size:15.33px;letter-spacing:-0.620px;color:#e2e2e2">100%</div>
<div class="t" style="left:723.30px;top:940.29px;font-size:15.33px;letter-spacing:0.560px;color:#e2e2e2">None</div>
<div class="t" style="left:745.00px;top:999.29px;font-size:15.33px;letter-spacing:0.120px;color:#e2e2e2">Apply scaling themselves</div>
<div class="t" style="left:745.00px;top:1030.89px;font-size:15.33px;letter-spacing:0.031px;color:#e2e2e2">Scaled by the system</div>
<div class="t" style="left:745.00px;top:1061.69px;font-size:15.33px;letter-spacing:0.217px;color:#e2e2e2">Allow in fullscreen windows</div>
<div class="t" style="left:363.60px;top:1358.69px;font-size:15.33px;letter-spacing:-0.471px;color:#8c8c8c">Reset</div>
<div class="t" style="left:1226.20px;top:1358.69px;font-size:15.33px;letter-spacing:0.080px;color:#8c8c8c">Apply</div>
</div>
</body></html>
